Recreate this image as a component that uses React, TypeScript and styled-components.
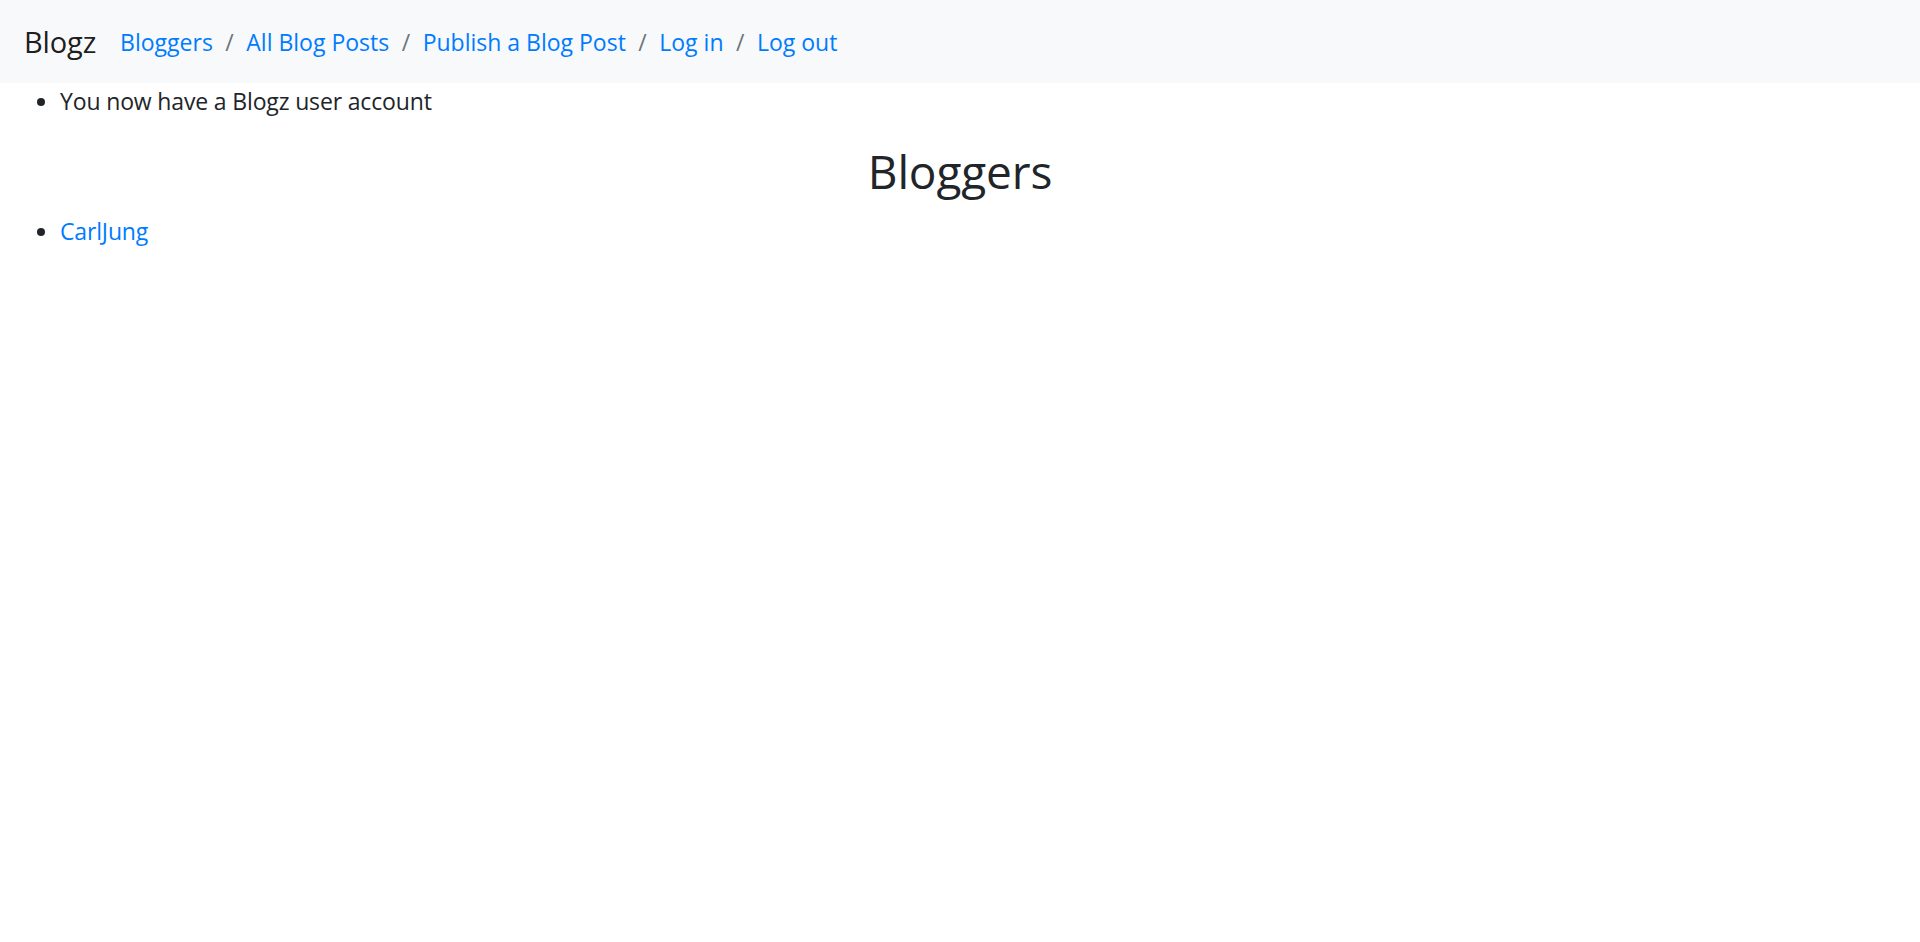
import React from "react";
import styled, { createGlobalStyle } from "styled-components";

const Global = createGlobalStyle`
  html, body { margin: 0; padding: 0; background: #fff; }
  body {
    font-family: "Open Sans", "Noto Sans", sans-serif;
    font-size: 23px;
    letter-spacing: -0.15px;
    line-height: 36px;
    color: #212529;
  }
  * { box-sizing: border-box; }
`;

const Navbar = styled.nav`
  display: flex;
  align-items: center;
  height: 83px;
  padding: 0 24px;
  background: #f8f9fa;
`;

const Brand = styled.a`
  font-size: 29px;
  line-height: 45px;
  color: rgba(0, 0, 0, 0.9);
  margin-right: 24px;
  text-decoration: none;
`;

const Crumbs = styled.ol`
  display: flex;
  list-style: none;
  margin: 0;
  padding: 0;
  letter-spacing: 0;
`;

const Crumb = styled.li`
  & + &::before {
    content: "/";
    color: #6c757d;
    padding: 0 12.5px;
  }
`;

const Link = styled.a`
  color: #007bff;
  text-decoration: none;
`;

const List = styled.ul`
  margin: 0 0 24px;
  padding-left: 60px;
`;

const Heading = styled.h2`
  margin: 0 0 12px;
  font-size: 46px;
  font-weight: 400;
  line-height: 57.6px;
  text-align: center;
`;

export default function App() {
  const links = ["Bloggers", "All Blog Posts", "Publish a Blog Post", "Log in", "Log out"];
  return (
    <>
      <Global />
      <Navbar>
        <Brand href="#">Blogz</Brand>
        <Crumbs>
          {links.map((l) => (
            <Crumb key={l}>
              <Link href="#">{l}</Link>
            </Crumb>
          ))}
        </Crumbs>
      </Navbar>
      <List>
        <li>You now have a Blogz user account</li>
      </List>
      <Heading>Bloggers</Heading>
      <List>
        <li>
          <Link href="#">CarlJung</Link>
        </li>
      </List>
    </>
  );
}
